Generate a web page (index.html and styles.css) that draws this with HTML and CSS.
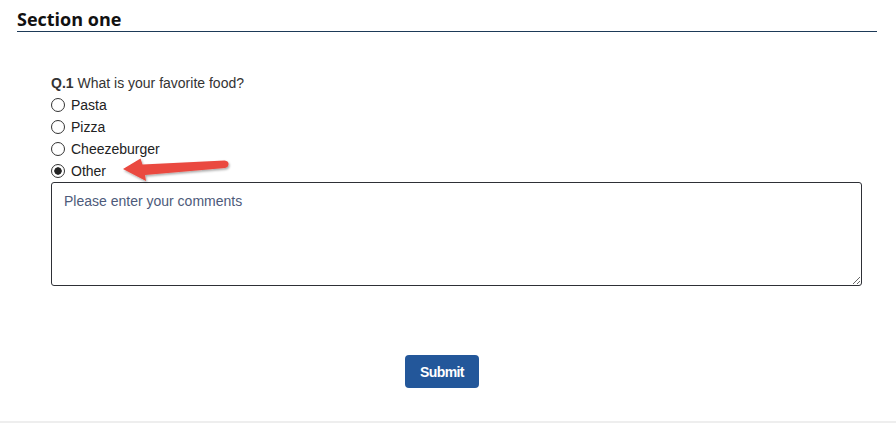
FILE: index.html
```html
<!DOCTYPE html>
<html>
<head>
<meta charset="utf-8">
<link rel="stylesheet" href="styles.css">
</head>
<body>
<div class="page">
  <header class="section-head">
    <h1 class="section-title">Section one</h1>
  </header>
  <form class="question">
    <div class="q-label"><b>Q.1</b> What is your favorite food?</div>
    <label class="option"><input type="radio" name="food" class="radio"><span>Pasta</span></label>
    <label class="option"><input type="radio" name="food" class="radio"><span>Pizza</span></label>
    <label class="option"><input type="radio" name="food" class="radio"><span>Cheezeburger</span></label>
    <label class="option"><input type="radio" name="food" class="radio" checked><span>Other</span></label>
    <textarea class="comments" placeholder="Please enter your comments"></textarea>
  </form>
  <div class="actions">
    <button class="submit" type="button">Submit</button>
  </div>
  <div class="footer-band"></div>
  <svg class="annotation-arrow" width="130" height="40" viewBox="110 150 130 40">
    <defs>
      <filter id="sh" x="-20%" y="-40%" width="140%" height="180%">
        <feDropShadow dx="1" dy="1.5" stdDeviation="1.2" flood-color="#000" flood-opacity="0.35"/>
      </filter>
    </defs>
    <path filter="url(#sh)" fill="#ea4a40" d="M123,169 L140.5,158.5 L142.5,164.5 L224.5,160.5 Q229,161 228.5,164.5 Q228,167.5 225,168 L145,175 L146,181 Z"/>
  </svg>
</div>
</body>
</html>
```
FILE: styles.css
```css
html, body {
  margin: 0;
  padding: 0;
  background: #fff;
}
body {
  font-family: "Liberation Sans", Arial, sans-serif;
  font-size: 14px;
  color: #333;
}
.page {
  position: relative;
  width: 896px;
  height: 423px;
  display: flex;
  flex-direction: column;
}
.section-head {
  margin: 7px 19px 0 17px;
  border-bottom: 1px solid #1d3a58;
}
.section-title {
  margin: 0;
  font-family: "Open Sans", "Noto Sans", sans-serif;
  font-weight: 700;
  font-size: 18px;
  line-height: 24px;
  color: #111;
}
.question {
  margin: 40px 0 0 51px;
  display: flex;
  flex-direction: column;
  width: 811px;
}
.q-label {
  line-height: 22px;
  color: #333;
}
.q-label b {
  font-weight: 700;
}
.option {
  display: flex;
  align-items: center;
  height: 22px;
  line-height: 22px;
  color: #222;
}
.radio {
  -webkit-appearance: none;
  appearance: none;
  width: 14px;
  height: 14px;
  margin: 0 6px 0 0;
  border: 1px solid #333;
  border-radius: 50%;
  background: #fff;
  box-sizing: border-box;
}
.radio:checked {
  background: radial-gradient(circle, #222 0, #222 3.4px, #fff 4px);
}
.comments {
  box-sizing: border-box;
  width: 811px;
  height: 104px;
  margin: 0;
  padding: 10px 12px;
  border: 1px solid #2e3036;
  border-radius: 3px;
  font-family: "Liberation Sans", Arial, sans-serif;
  font-size: 14px;
  color: #333;
  resize: both;
}
.comments::placeholder {
  color: #4d5a7a;
  opacity: 1;
}
.actions {
  display: flex;
  justify-content: center;
  padding: 0 29px 0 17px;
  margin-top: 69px;
}
.submit {
  width: 74px;
  height: 33px;
  border: none;
  border-radius: 4px;
  background: #23579a;
  color: #fff;
  font-family: "Liberation Sans", Arial, sans-serif;
  font-weight: 700;
  font-size: 14px;
  letter-spacing: -0.6px;
  padding: 0;
}
.footer-band {
  margin-top: auto;
  height: 2px;
  background: #eeeeee;
}
.annotation-arrow {
  position: absolute;
  left: 110px;
  top: 150px;
}
```
